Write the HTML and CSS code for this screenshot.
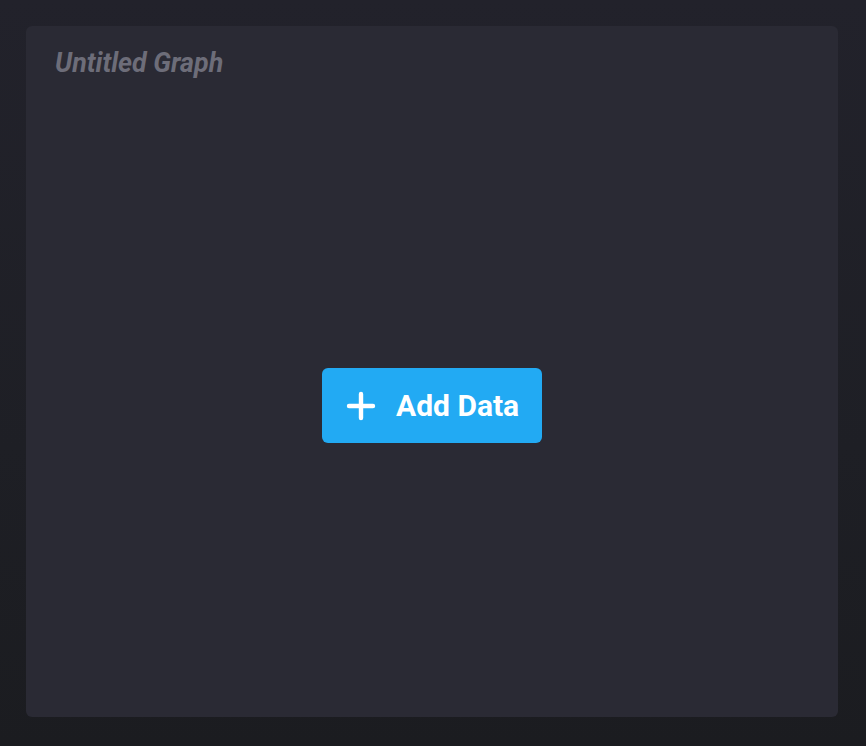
FILE: index.html
```html
<!DOCTYPE html>
<html>
<head>
<meta charset="utf-8">
<link rel="stylesheet" href="styles.css">
</head>
<body>
<div class="page">
  <div class="card">
    <div class="card-header">
      <h1 class="title">Untitled Graph</h1>
    </div>
    <div class="card-body">
      <button class="add-btn" type="button">
        <svg class="plus" width="30" height="30" viewBox="0 0 30 30" aria-hidden="true">
          <path d="M15 3 V27 M3 15 H27" stroke="#fff" stroke-width="4.4" stroke-linecap="round" fill="none"/>
        </svg>
        <span class="btn-label">Add Data</span>
      </button>
    </div>
  </div>
</div>
</body>
</html>
```
FILE: styles.css
```css
html, body {
  margin: 0;
  padding: 0;
  height: 100%;
}
body {
  background: linear-gradient(180deg, #22222b 0%, #1e1f25 60%, #1b1c20 100%);
  font-family: Roboto, "Noto Sans", sans-serif;
}
.page {
  box-sizing: border-box;
  height: 746px;
  padding: 26px 28px 29px 26px;
  display: flex;
}
.card {
  flex: 1;
  background: #2a2a34;
  border-radius: 6px;
  display: flex;
  flex-direction: column;
}
.card-header {
  height: 68px;
  box-sizing: border-box;
  padding: 21px 0 0 29px;
}
.title {
  margin: 0;
  font-size: 26.8px;
  font-style: italic;
  font-weight: 700;
  line-height: 32px;
  color: #6d6d79;
}
.card-body {
  flex: 1;
  display: flex;
  align-items: center;
  justify-content: center;
}
.add-btn {
  width: 220px;
  height: 75px;
  border: none;
  border-radius: 6px;
  background: #22aaf3;
  color: #fff;
  display: flex;
  align-items: center;
  padding: 0 0 0 24px;
  gap: 20px;
  font-family: Roboto, "Noto Sans", sans-serif;
  cursor: pointer;
}
.plus {
  display: block;
  flex: none;
}
.btn-label {
  font-size: 30px;
  font-weight: 700;
  line-height: 1;
}
```
